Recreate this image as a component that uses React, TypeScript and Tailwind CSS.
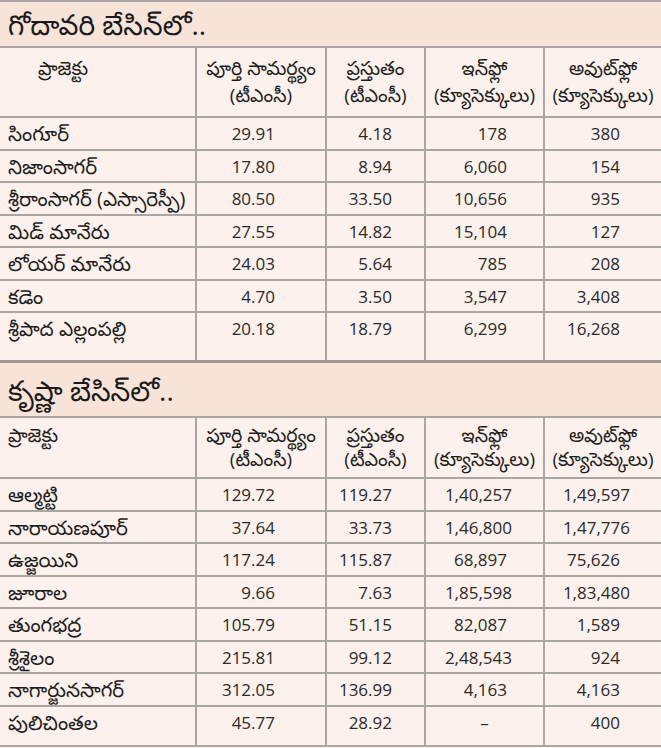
import React from "react";

type Row = [string, string, string, string, string];

const header: string[][] = [
  ["ప్రాజెక్టు"],
  ["పూర్తి సామర్థ్యం", "(టీఎంసీ)"],
  ["ప్రస్తుతం", "(టీఎంసీ)"],
  ["ఇన్‌ఫ్లో", "(క్యూసెక్కులు)"],
  ["అవుట్‌ఫ్లో", "(క్యూసెక్కులు)"],
];

const godavari: Row[] = [
  ["సింగూర్", "29.91", "4.18", "178", "380"],
  ["నిజాంసాగర్", "17.80", "8.94", "6,060", "154"],
  ["శ్రీరాంసాగర్ (ఎస్సారెస్పీ)", "80.50", "33.50", "10,656", "935"],
  ["మిడ్ మానేరు", "27.55", "14.82", "15,104", "127"],
  ["లోయర్ మానేరు", "24.03", "5.64", "785", "208"],
  ["కడెం", "4.70", "3.50", "3,547", "3,408"],
  ["శ్రీపాద ఎల్లంపల్లి", "20.18", "18.79", "6,299", "16,268"],
];

const krishna: Row[] = [
  ["ఆల్మట్టి", "129.72", "119.27", "1,40,257", "1,49,597"],
  ["నారాయణపూర్", "37.64", "33.73", "1,46,800", "1,47,776"],
  ["ఉజ్జయిని", "117.24", "115.87", "68,897", "75,626"],
  ["జూరాల", "9.66", "7.63", "1,85,598", "1,83,480"],
  ["తుంగభద్ర", "105.79", "51.15", "82,087", "1,589"],
  ["శ్రీశైలం", "215.81", "99.12", "2,48,543", "924"],
  ["నాగార్జునసాగర్", "312.05", "136.99", "4,163", "4,163"],
  ["పులిచింతల", "45.77", "28.92", "–", "400"],
];

const grid = "grid grid-cols-[195px_130px_99px_119px_118px]";
const vline = "border-l-2 border-[#a9a6a4]";

function Header({ tall, firstPad }: { tall: boolean; firstPad: string }) {
  return (
    <div
      className={`${grid} border-b-2 border-[#a9a6a4] ${tall ? "h-[70px]" : "h-[61px]"}`}
    >
      {header.map((lines, i) => (
        <div
          key={i}
          className={`flex flex-col ${i === 0 ? `items-start ${firstPad}` : `items-center ${vline}`} ${
            tall ? "pt-[7px] leading-[27px]" : "pt-[5px] leading-[24px]"
          } text-[19px] text-[#1d1d1d]`}
        >
          {lines.map((l, j) => (
            <span key={j} className="whitespace-nowrap">
              {l}
            </span>
          ))}
        </div>
      ))}
    </div>
  );
}

function DataRow({ row, last, extra }: { row: Row; last: boolean; extra: string }) {
  return (
    <div
      className={`${grid} ${last ? extra : "h-[32.5px] border-b-2 border-[#a9a6a4]"}`}
    >
      <div className="pl-[8px] pt-[3px] text-[20px] leading-[25px] whitespace-nowrap text-[#1d1d1d]">
        {row[0]}
      </div>
      <div className={`${vline} pr-[50px] pt-[4px] text-right text-[17px] leading-[24px] text-[#2a2a2a]`}>
        {row[1]}
      </div>
      <div className={`${vline} pr-[32px] pt-[4px] text-right text-[17px] leading-[24px] text-[#2a2a2a]`}>
        {row[2]}
      </div>
      <div
        className={`${vline} pt-[4px] text-[17px] leading-[24px] text-[#2a2a2a] ${
          row[3] === "–" ? "text-center" : row[3].length >= 8 ? "text-right pr-[31px]" : "text-right pr-[36px]"
        }`}
      >
        {row[3]}
      </div>
      <div
        className={`${vline} pt-[4px] text-[17px] leading-[24px] text-[#2a2a2a] text-right ${
          row[4].length >= 8 ? "pr-[31px]" : "pr-[41px]"
        }`}
      >
        {row[4]}
      </div>
    </div>
  );
}

export default function App() {
  return (
    <div
      className="w-[661px] h-[748px] overflow-hidden bg-[#fcf1ec] flex flex-col"
      style={{ fontFamily: '"Open Sans", "Noto Sans Telugu", "Lohit Telugu", "Noto Sans", sans-serif' }}
    >
      <div className="h-[48px] border-t-2 border-b-2 border-[#a9a6a4] bg-[#f8e3d9] flex items-center pl-[8px]">
        <span className="text-[28px] leading-none text-[#1a1a1a]">గోదావరి బేసిన్‌లో..</span>
      </div>
      <Header tall={true} firstPad="pl-[38px]" />
      {godavari.map((r, i) => (
        <DataRow
          key={i}
          row={r}
          last={i === godavari.length - 1}
          extra="h-[50px] border-b-[3px] border-[#9c9896]"
        />
      ))}
      <div className="h-[55px] border-b-2 border-[#a9a6a4] bg-[#f8e3d9] flex items-center pl-[8px]">
        <span className="text-[28px] leading-none text-[#1a1a1a]">కృష్ణా బేసిన్‌లో..</span>
      </div>
      <Header tall={false} firstPad="pl-[8px]" />
      {krishna.map((r, i) => (
        <DataRow
          key={i}
          row={r}
          last={i === krishna.length - 1}
          extra="h-[40px] border-b-2 border-[#a9a6a4]"
        />
      ))}
    </div>
  );
}
